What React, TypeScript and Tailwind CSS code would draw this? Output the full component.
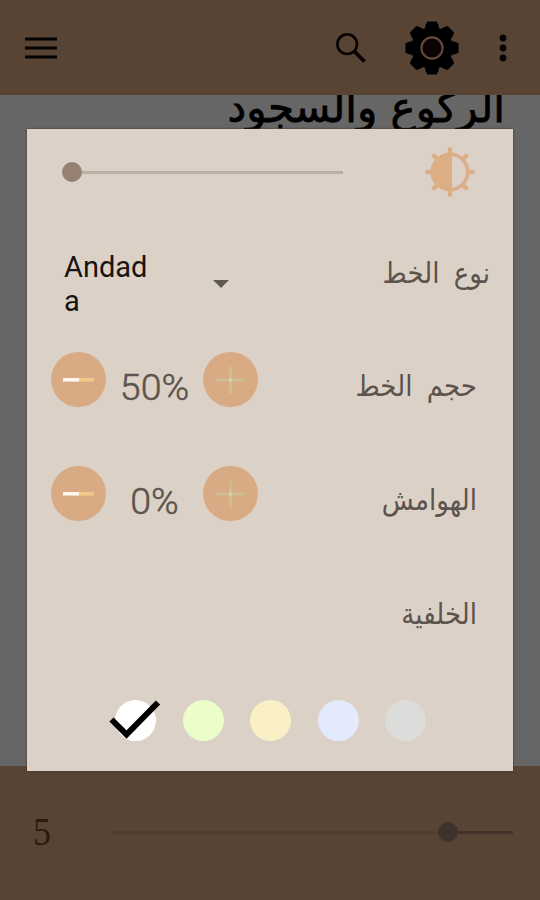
const swatches = [
    { id: "white", className: "bg-white", selected: true },
    { id: "green", className: "bg-[#edfdca]" },
    { id: "yellow", className: "bg-[#fbefc6]" },
    { id: "blue", className: "bg-[#e2eafc]" },
    { id: "grey", className: "bg-[#dcdcdb]" },
]

const angles = [0, 45, 90, 135, 180, 225, 270, 315]

function GearIcon() {
    return (
        <svg width="54" height="54" viewBox="-27 -27 54 54">
            <circle r="21" />
            {angles.map((a) => (
                <path key={a} d="M-7 -18 L-6.6 -22.5 L-4.6 -26.6 H4.6 L6.6 -22.5 L7 -18 Z" transform={`rotate(${a})`} />
            ))}
            <circle r="10.6" fill="#0a0302" stroke="#5b4a3e" strokeWidth="2.2" />
        </svg>
    )
}

function BrightnessIcon() {
    return (
        <svg width="50" height="50" viewBox="-25 -25 50 50" stroke="#dcae86" fill="none">
            <circle r="17.7" strokeWidth="3.6" />
            <path d="M2 -18 A18 18 0 1 0 2 18 Z" fill="#dcae86" stroke="none" />
            {angles.map((a) => (
                <path key={a} d="M0 -18 V-24.5" strokeWidth="4.4" transform={`rotate(${a})`} />
            ))}
        </svg>
    )
}

function RoundButton({ type }: { type: "minus" | "plus" }) {
    return (
        <button className="h-[55px] w-[55px] rounded-full bg-[#d9ab84]">
            <svg width="55" height="55" viewBox="0 0 55 55" fill="none">
                {type === "minus" ? (
                    <>
                        <path d="M12 27.8 H28" stroke="#fff6ec" strokeWidth="3.6" />
                        <path d="M28 27.8 H43" stroke="#efcb83" strokeWidth="3.6" />
                    </>
                ) : (
                    <>
                        <path d="M13.5 28 H41.5 M27.5 14.5 V42" stroke="#ccbd93" strokeWidth="2.8" />
                        <circle cx="27.5" cy="28" r="2" fill="#dfd0a5" />
                    </>
                )}
            </svg>
        </button>
    )
}

function Stepper({ value }: { value: string }) {
    return (
        <div className="flex items-center">
            <RoundButton type="minus" />
            <span className="w-[97px] pt-[15px] text-center font-[Roboto,sans-serif] text-[37.5px] leading-[44px] font-light text-[#5b534c] [-webkit-text-stroke:0.5px_#5b534c]">
                {value}
            </span>
            <RoundButton type="plus" />
        </div>
    )
}

function Label({ children }: { children: string }) {
    return (
        <span
            dir="rtl"
            className="font-['DejaVu_Sans_Condensed','DejaVu_Sans',sans-serif] text-[29px] leading-10 whitespace-nowrap text-[#5b534c] [font-stretch:condensed] [word-spacing:6px]"
        >
            {children}
        </span>
    )
}

export default function App() {
    return (
        <div className="relative flex h-[900px] w-[540px] flex-col overflow-hidden bg-[#666666]">
            {/* Toolbar */}
            <header className="z-10 flex h-[95px] shrink-0 items-center bg-[#574435] pl-[25px]">
                <svg width="32" height="22" viewBox="0 0 32 22" stroke="#060302" strokeWidth="3">
                    <path d="M0 2 H32 M0 11 H32 M0 20 H32" />
                </svg>
                <svg className="ml-[278px]" width="32" height="32" viewBox="0 0 32 32" fill="none" stroke="#060302">
                    <circle cx="12.2" cy="12.2" r="9.8" strokeWidth="2.6" />
                    <path d="M19 19 L29.5 29.5" strokeWidth="3.8" />
                </svg>
                <div className="ml-[38px]">
                    <GearIcon />
                </div>
                <svg className="ml-[40px]" width="8" height="30" viewBox="0 0 8 30" fill="#060302">
                    <circle cx="4" cy="5" r="3.4" />
                    <circle cx="4" cy="15" r="3.4" />
                    <circle cx="4" cy="25" r="3.4" />
                </svg>
            </header>

            {/* Page text behind the dialog */}
            <main dir="rtl" className="h-[671px] shrink-0 pr-[35px]">
                <h1 className="-mt-[15px] font-['DejaVu_Sans',sans-serif] text-[42px] leading-[56px] whitespace-nowrap text-black [-webkit-text-stroke:0.8px_black]">
                    الركوع والسجود
                </h1>
            </main>

            <footer className="flex h-[134px] shrink-0 items-center bg-[#574435] pb-[2px] pl-[33px]">
                <span className="w-[79px] origin-left scale-x-[0.9] font-['Liberation_Serif',serif] text-[40px] text-[#2a1a12]">5</span>
                <div className="flex w-[401px] items-center">
                    <div className="h-[3px] w-[326px] bg-[#4e3d30]" />
                    <div className="h-5 w-5 rounded-full bg-[#3f312b]" />
                    <div className="h-[3px] flex-1 bg-[#41332c]" />
                </div>
            </footer>

            {/* Display settings dialog */}
            <section className="absolute top-[129px] left-[27px] z-20 flex h-[642px] w-[486px] flex-col bg-[#dbd1c7] shadow-[0_0_2px_#3d3027]">
                <div className="flex h-[86px] shrink-0 items-center justify-between pr-[38px] pl-[35px]">
                    <div className="flex w-[281px] items-center">
                        <div className="h-5 w-5 rounded-full bg-[#968074]" />
                        <div className="h-[3px] flex-1 bg-[#bdafa4]" />
                    </div>
                    <BrightnessIcon />
                </div>
                <div className="flex h-[108px] shrink-0 items-start justify-between pr-[23px] pl-[37px]">
                    <div className="flex items-center pt-[35px]">
                        <p className="w-[90px] font-[Roboto,sans-serif] text-[29px] leading-[34px] break-all text-[#17130f]">Andada</p>
                        <svg className="ml-[59px]" width="16" height="8" viewBox="0 0 16 8" fill="#5d594d">
                            <path d="M0 0 H16 L8 8 Z" />
                        </svg>
                    </div>
                    <div className="pt-[38px]">
                        <Label>نوع الخط</Label>
                    </div>
                </div>
                <div className="flex h-[113px] shrink-0 items-center justify-between pr-[36px] pl-[24px]">
                    <Stepper value="50%" />
                    <div className="pt-[13px]">
                        <Label>حجم الخط</Label>
                    </div>
                </div>
                <div className="flex h-[114px] shrink-0 items-center justify-between pr-[36px] pl-[24px]">
                    <Stepper value="0%" />
                    <div className="pt-[13px]">
                        <Label>الهوامش</Label>
                    </div>
                </div>
                <div className="flex h-[114px] shrink-0 items-center justify-end pt-[13px] pr-[36px]">
                    <Label>الخلفية</Label>
                </div>
                <div className="flex flex-1 items-center gap-[26.5px] pt-[6px] pl-[88px]">
                    {swatches.map((s) => (
                        <button key={s.id} className={`relative h-[41px] w-[41px] shrink-0 rounded-full ${s.className}`}>
                            {s.selected && (
                                <svg className="absolute top-0 -left-[6px]" width="52" height="40" viewBox="0 0 52 40" fill="none">
                                    <path d="M2.5 19.5 L17.5 34.5 L49 2.5" stroke="#000" strokeWidth="6" />
                                </svg>
                            )}
                        </button>
                    ))}
                </div>
            </section>
        </div>
    )
}
